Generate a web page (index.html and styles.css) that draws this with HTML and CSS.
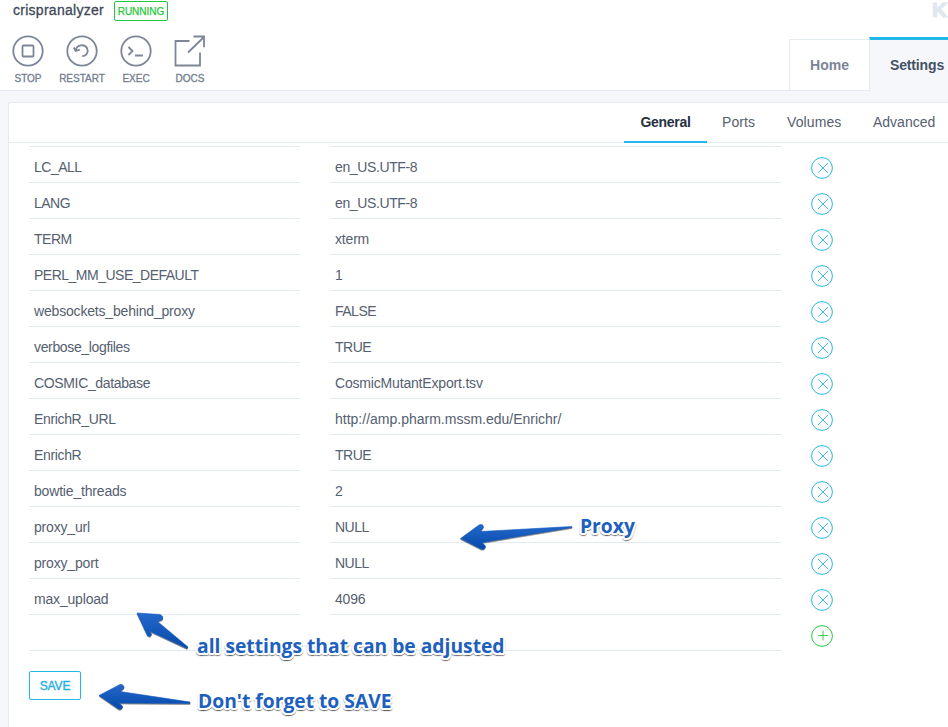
FILE: index.html
```html
<!DOCTYPE html>
<html lang="en">
<head>
<meta charset="utf-8">
<title>crispranalyzer</title>
<link rel="stylesheet" href="styles.css">
</head>
<body>
<header class="header">
  <div class="left">
    <div class="title"><span class="name">crispranalyzer</span><span class="badge">RUNNING</span></div>
    <nav class="actions">
      <a class="action stop"><svg width="32" height="32" viewBox="0 0 32 32"><circle cx="16" cy="16" r="14.7"/><rect x="10.5" y="10.5" width="11" height="11" rx="1"/></svg><span>STOP</span></a>
      <a class="action restart"><svg width="32" height="32" viewBox="0 0 32 32"><circle cx="16" cy="16" r="14.7"/><path d="M9.500 15.500C11 9 18.500 9 21 13C23 17 20.500 21.200 16.200 21.200M7.800 12.500L9.500 16L13.800 14.700"/></svg><span>RESTART</span></a>
      <a class="action exec"><svg width="32" height="32" viewBox="0 0 32 32"><circle cx="16" cy="16" r="14.7"/><path d="M8.500 12L12.500 16L8.500 20M15 20.500H23"/></svg><span>EXEC</span></a>
      <a class="action docs"><svg width="32" height="32" viewBox="0 0 32 32"><path d="M15.500 6H1.500V30.500H26V17.500M14 17.500L30 2M19.500 1.500H30V12.200"/></svg><span>DOCS</span></a>
    </nav>
  </div>
  <div class="right">
    <div class="brand">K</div>
    <nav class="tabs"><a class="tab">Home</a><a class="tab active">Settings</a></nav>
  </div>
</header>
<main class="card">
  <nav class="subtabs"><a class="on">General</a><a class="ports">Ports</a><a class="volumes">Volumes</a><a class="advanced">Advanced</a></nav>
  <div class="rows">
    <div class="row"><span class="caps">LC_ALL</span><span class="locale">en_US.UTF-8</span><svg class="ico" viewBox="0 0 22 22"><circle cx="11" cy="11" r="10.4"/><path d="M7 6L17 16M17 6L7 16"/></svg></div>
    <div class="row"><span class="caps">LANG</span><span class="locale">en_US.UTF-8</span><svg class="ico" viewBox="0 0 22 22"><circle cx="11" cy="11" r="10.4"/><path d="M7 6L17 16M17 6L7 16"/></svg></div>
    <div class="row"><span class="caps">TERM</span><span>xterm</span><svg class="ico" viewBox="0 0 22 22"><circle cx="11" cy="11" r="10.4"/><path d="M7 6L17 16M17 6L7 16"/></svg></div>
    <div class="row"><span class="caps">PERL_MM_USE_DEFAULT</span><span>1</span><svg class="ico" viewBox="0 0 22 22"><circle cx="11" cy="11" r="10.4"/><path d="M7 6L17 16M17 6L7 16"/></svg></div>
    <div class="row"><span>websockets_behind_proxy</span><span class="caps">FALSE</span><svg class="ico" viewBox="0 0 22 22"><circle cx="11" cy="11" r="10.4"/><path d="M7 6L17 16M17 6L7 16"/></svg></div>
    <div class="row"><span class="mixed">verbose_logfiles</span><span class="caps">TRUE</span><svg class="ico" viewBox="0 0 22 22"><circle cx="11" cy="11" r="10.4"/><path d="M7 6L17 16M17 6L7 16"/></svg></div>
    <div class="row"><span class="mixed">COSMIC_database</span><span>CosmicMutantExport.tsv</span><svg class="ico" viewBox="0 0 22 22"><circle cx="11" cy="11" r="10.4"/><path d="M7 6L17 16M17 6L7 16"/></svg></div>
    <div class="row"><span class="mixed">EnrichR_URL</span><span class="url">http://amp.pharm.mssm.edu/Enrichr/</span><svg class="ico" viewBox="0 0 22 22"><circle cx="11" cy="11" r="10.4"/><path d="M7 6L17 16M17 6L7 16"/></svg></div>
    <div class="row"><span class="mixed">EnrichR</span><span class="caps">TRUE</span><svg class="ico" viewBox="0 0 22 22"><circle cx="11" cy="11" r="10.4"/><path d="M7 6L17 16M17 6L7 16"/></svg></div>
    <div class="row"><span>bowtie_threads</span><span>2</span><svg class="ico" viewBox="0 0 22 22"><circle cx="11" cy="11" r="10.4"/><path d="M7 6L17 16M17 6L7 16"/></svg></div>
    <div class="row"><span>proxy_url</span><span class="caps">NULL</span><svg class="ico" viewBox="0 0 22 22"><circle cx="11" cy="11" r="10.4"/><path d="M7 6L17 16M17 6L7 16"/></svg></div>
    <div class="row"><span>proxy_port</span><span class="caps">NULL</span><svg class="ico" viewBox="0 0 22 22"><circle cx="11" cy="11" r="10.4"/><path d="M7 6L17 16M17 6L7 16"/></svg></div>
    <div class="row"><span>max_upload</span><span>4096</span><svg class="ico" viewBox="0 0 22 22"><circle cx="11" cy="11" r="10.4"/><path d="M7 6L17 16M17 6L7 16"/></svg></div>
    <div class="row"><span></span><span></span><svg class="ico add" viewBox="0 0 22 22"><circle cx="11" cy="11" r="10.4"/><path d="M7 10.500H17M12 5.500V15.500"/></svg></div>
  </div>
  <button class="save">SAVE</button>
</main>
<svg class="arrows" width="948" height="727" viewBox="0 0 948 727">
  <defs><linearGradient id="blue" x1="0" y1="0" x2="0" y2="1"><stop offset="0" stop-color="#2468cb"/><stop offset="1" stop-color="#0549ab"/></linearGradient></defs>
  <path d="M460.500 538.500L479 525Q483 523.500 483.500 527L480.500 531.500L572 526.500V527.500L482 542.500L485.500 546Q485 550 481 549Z"/>
  <path d="M137 613L160 614.500Q164 616 162.500 619.500L157.500 621.500L188 647L187 648.500L149.500 631L151.500 634Q151 637.500 147.500 635.500Z"/>
  <path d="M99 695.500L120 684.500Q124 684 124 688L120 691.500L190 702V703.500L119 703L122.500 706Q122.500 710 118.500 709Z"/>
</svg>
<div class="note proxy">Proxy</div>
<div class="note adjust">all settings that can be adjusted</div>
<div class="note forget">Don't forget to SAVE</div>
</body>
</html>
```
FILE: styles.css
```css
* { box-sizing: border-box; }
body { margin: 0; width: 948px; height: 727px; overflow: hidden; position: relative; background: #f5f7fb; font-family: "Liberation Sans", Arial, sans-serif; font-size: 14px; color: #556070; }
.header { height: 91px; display: flex; justify-content: space-between; background: #fff; border-bottom: 1px solid #e4ebf2; }
.title { display: flex; align-items: flex-start; height: 35px; padding-left: 13px; }
.name { width: 101px; line-height: 20px; color: #3d4858; letter-spacing: .27px; -webkit-text-stroke: .3px #3d4858; }
.badge { width: 54px; height: 20px; margin-top: 1px; border: 1px solid #1ec93c; border-radius: 2px; color: #1ec93c; font-size: 10px; line-height: 20px; text-align: center; white-space: nowrap; -webkit-text-stroke: .25px #1ec93c; }
.actions { display: flex; padding-left: 1px; }
.action { width: 54px; display: flex; flex-direction: column; align-items: center; font-size: 10px; line-height: 12px; color: #727d8f; -webkit-text-stroke: .3px #727d8f; }
.action svg { fill: none; stroke: #7c8698; stroke-width: 1.8; margin-bottom: 6px; }
.right { width: 159px; }
.brand { height: 37px; padding-left: 143px; font-size: 21px; line-height: 20px; font-weight: bold; color: #dfe8f1; white-space: nowrap; -webkit-text-stroke: 1.2px #dfe8f1; }
.tabs { display: flex; align-items: flex-end; height: 54px; }
.tab { flex: none; width: 80px; height: 52px; border: 1px solid #e4ebf2; border-right: 0; line-height: 51px; text-align: center; font-weight: bold; color: #7b8596; }
.tab.active { width: 95px; height: 54px; border: 0; border-top: 3px solid #22b8eb; border-left: 1px solid #e4ebf2; background: #f5f7fb; color: #455064; line-height: 50px; letter-spacing: -.15px; }
.card { margin: 11px 0 0 8px; height: 640px; background: #fff; border: 1px solid #e4ebf2; border-right: 0; border-top-left-radius: 3px; }
.subtabs { height: 40px; display: flex; padding-left: 615px; border-bottom: 1px solid #e4ebf2; line-height: 38px; }
.subtabs .on { width: 83px; height: 40px; border-bottom: 2px solid #22b8eb; text-align: center; color: #26303f; font-weight: bold; letter-spacing: -.3px; }
.ports { margin-left: 15px; width: 65px; letter-spacing: .1px; }
.volumes { width: 86px; letter-spacing: .1px; }
.rows { margin: 4px 0 0 20px; width: 824px; }
.row { display: grid; grid-template-columns: 271px 451px 22px; column-gap: 30px; height: 36px; align-items: center; }
.row span { height: 36px; padding-left: 5px; border-bottom: 1px solid #e2eaf2; line-height: 40px; letter-spacing: -.18px; white-space: nowrap; }
.row:first-child span { height: 37px; margin-top: -1px; border-top: 1px solid #e2eaf2; }
.row .caps { letter-spacing: -.5px; }
.row .mixed { letter-spacing: -.35px; }
.row .locale { letter-spacing: -.38px; }
.row .url { letter-spacing: 0; }
.ico { width: 22px; height: 22px; margin: 6px 0 0 0; fill: none; stroke: #2bb5e7; stroke-width: 1; }
.ico path { stroke-width: .9; }
.ico.add { stroke: #24c944; }
.save { display: block; margin: 20px 0 0 20px; width: 52px; height: 29px; padding: 0; border: 1px solid #22b8eb; border-radius: 2px; background: #fff; color: #22b0e4; font: 12px/28px "Liberation Sans", Arial, sans-serif; letter-spacing: -.1px; -webkit-text-stroke: .35px #22b0e4; }
.arrows { position: absolute; left: 0; top: 0; fill: url(#blue); filter: drop-shadow(0 1px .7px rgba(0, 0, 0, .5)); }
.arrows path { stroke: #1459bd; stroke-width: .6; stroke-linejoin: round; }
.note { position: absolute; font: bold 19.25px/24px "Open Sans", "Noto Sans", sans-serif; color: #1d60be; white-space: nowrap; text-shadow: -2px 0 #fff, 2px 0 #fff, 0 -2px #fff, 0 2px #fff, -1px -1px #fff, 1px -1px #fff, 1px 2px #fff, -1px 2px #fff, -2px 1px #fff, 2px 1px #fff, -1px 3px 1px rgba(0, 0, 0, .35), 1px 3px 1px rgba(0, 0, 0, .45), 2px 2px 1px rgba(0, 0, 0, .3), -2px 2px 1px rgba(0, 0, 0, .3); }
.proxy { left: 580px; top: 514px; }
.adjust { left: 197px; top: 634px; }
.forget { left: 198px; top: 689px; }
```
